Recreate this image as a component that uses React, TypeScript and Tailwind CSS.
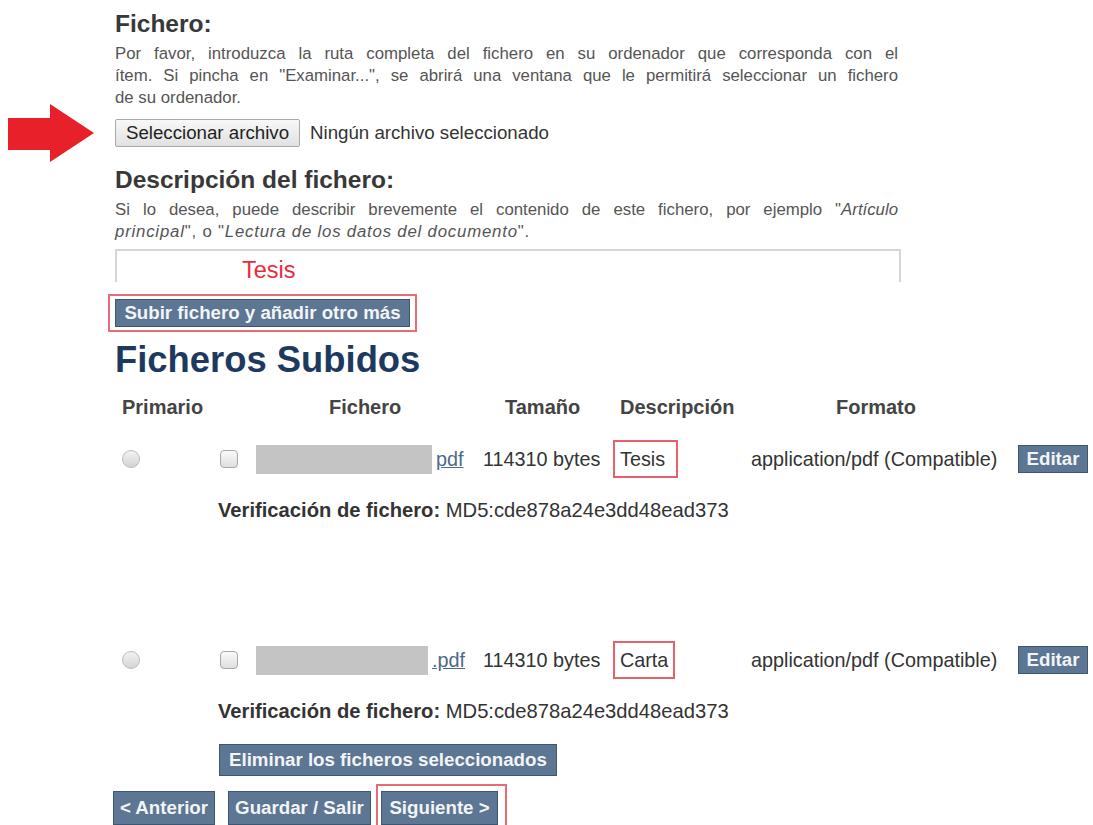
const btn =
  'border border-[#3e5670] bg-[#5c7693] text-[18.7px] font-bold leading-[24px] text-[#f2f4f6]';

const files = [
  { desc: 'Tesis', blur: 176, ext: 'pdf', descW: 65 },
  { desc: 'Carta', blur: 172, ext: '.pdf', descW: 62 },
];

function Radio() {
  return <span className="block h-[18px] w-[18px] rounded-full border border-[#bcbcbc] bg-linear-to-b from-[#f3f3f3] to-[#d4d4d4]" />;
}

function Checkbox() {
  return <span className="block h-[18px] w-[18px] rounded-[4px] border border-[#a9a9a9] bg-linear-to-b from-[#fafafa] to-[#dedede]" />;
}

function RedArrow() {
  return (
    <svg width="86" height="58" viewBox="0 0 86 58">
      <path d="M0 14 H42 V0 L86 29 L42 58 V46 H0 Z" fill="#e8202a" />
    </svg>
  );
}

function FileRow({ desc, blur, ext, descW }: (typeof files)[number]) {
  return (
    <div>
      <div className="grid grid-cols-[95px_268px_130px_138px_267px_auto] items-center text-[19.8px] leading-[26px] text-[#333]">
        <div className="pl-[7px]">
          <Radio />
        </div>
        <div className="flex items-center pl-[10px]">
          <Checkbox />
          <span className="ml-[18px] block h-[29px] bg-[#c4c4c4]" style={{ width: blur }} />
          <a className="ml-[4px] text-[#4d6a88] underline">{ext}</a>
        </div>
        <div className="pl-[5px]">114310 bytes</div>
        <div className="pl-[5px]">
          <div className="flex h-[38px] items-center border-2 border-[#e7616b] pl-[5px]" style={{ width: descW }}>
            {desc}
          </div>
        </div>
        <div className="pl-[5px]">application/pdf (Compatible)</div>
        <div className="pl-[5px]">
          <button className={`${btn} h-[28px] w-[70px]`}>Editar</button>
        </div>
      </div>
      <p className="mt-[19px] ml-[103px] text-[20.2px] leading-[26px] text-[#333]">
        <span className="font-bold">Verificación de fichero:</span> MD5:cde878a24e3dd48ead373
      </p>
    </div>
  );
}

export default function App() {
  return (
    <div className="h-[825px] w-[1093px] overflow-hidden bg-white font-['Liberation_Sans',Arial,sans-serif]">
      <div className="w-[901px] pl-[115px] pt-[10px]">
        <h2 className="text-[24.5px] font-bold leading-[28px] text-[#383838]">Fichero:</h2>
        <div className="mt-[5px] w-[783px] text-[16.8px] leading-[22px] text-[#555]">
          <p className="text-justify [text-align-last:justify]">
            Por favor, introduzca la ruta completa del fichero en su ordenador que corresponda con el
          </p>
          <p className="text-justify [text-align-last:justify]">
            ítem. Si pincha en "Examinar...", se abrirá una ventana que le permitirá seleccionar un fichero
          </p>
          <p>de su ordenador.</p>
        </div>

        <div className="-ml-[107px] -mt-[5px] flex items-center">
          <RedArrow />
          <button className="ml-[21px] h-[28px] w-[185px] rounded-[2px] border border-[#a9a9a9] bg-linear-to-b from-[#f8f8f8] to-[#e1e1e1] text-[18.7px] leading-[24px] text-[#222]">
            Seleccionar archivo
          </button>
          <span className="ml-[10px] text-[18.7px] text-[#333]">Ningún archivo seleccionado</span>
        </div>

        <h2 className="mt-[4px] text-[24.5px] font-bold leading-[28px] text-[#383838]">Descripción del fichero:</h2>
        <div className="mt-[5px] w-[783px] text-[16.8px] leading-[22px] text-[#555]">
          <p className="text-justify [text-align-last:justify]">
            Si lo desea, puede describir brevemente el contenido de este fichero, por ejemplo "<i>Artículo</i>
          </p>
          <p className="tracking-[0.8px]">
            <i>principal</i>", o "<i>Lectura de los datos del documento</i>".
          </p>
        </div>

        <div className="mt-[6px] h-[33px] w-[786px] border-2 border-b-0 border-[#d6d6d6] pl-[125px] pt-[6px] text-[23.5px] leading-[26px] text-[#ea2b3a]">
          Tesis
        </div>

        <div className="-ml-[7px] mt-[12px] inline-block border-2 border-[#ea6b73] px-[5px] py-[3px]">
          <button className={`${btn} h-[28px] w-[295px]`}>Subir fichero y añadir otro más</button>
        </div>

        <h1 className="mt-[7px] text-[36.4px] font-bold leading-[42px] text-[#1d3a5e]">Ficheros Subidos</h1>
      </div>

      <div className="pl-[115px]">
        <div className="mt-[13px] grid grid-cols-[95px_268px_130px_138px_267px_auto] text-[20px] font-bold leading-[26px] text-[#444]">
          <div className="pl-[7px]">Primario</div>
          <div className="pl-[119px]">Fichero</div>
          <div className="pl-[27px]">Tamaño</div>
          <div className="pl-[12px]">Descripción</div>
          <div className="pl-[90px]">Formato</div>
          <div />
        </div>

        <div className="mt-[20px]">
          <FileRow {...files[0]} />
        </div>
        <div className="mt-[118px]">
          <FileRow {...files[1]} />
        </div>

        <button className={`${btn} mt-[20px] ml-[104px] h-[32px] px-[9px]`}>Eliminar los ficheros seleccionados</button>

        <div className="-ml-[2px] mt-[8px] flex items-start">
          <button className={`${btn} mt-[7px] h-[34px] w-[102px]`}>&lt; Anterior</button>
          <button className={`${btn} ml-[13px] mt-[7px] h-[34px] w-[143px]`}>Guardar / Salir</button>
          <div className="ml-[5px] h-[50px] border-2 border-[#ea6b73] pl-[3px] pr-[7px] pt-[5px]">
            <button className={`${btn} h-[34px] w-[117px]`}>Siguiente &gt;</button>
          </div>
        </div>
      </div>
    </div>
  );
}
